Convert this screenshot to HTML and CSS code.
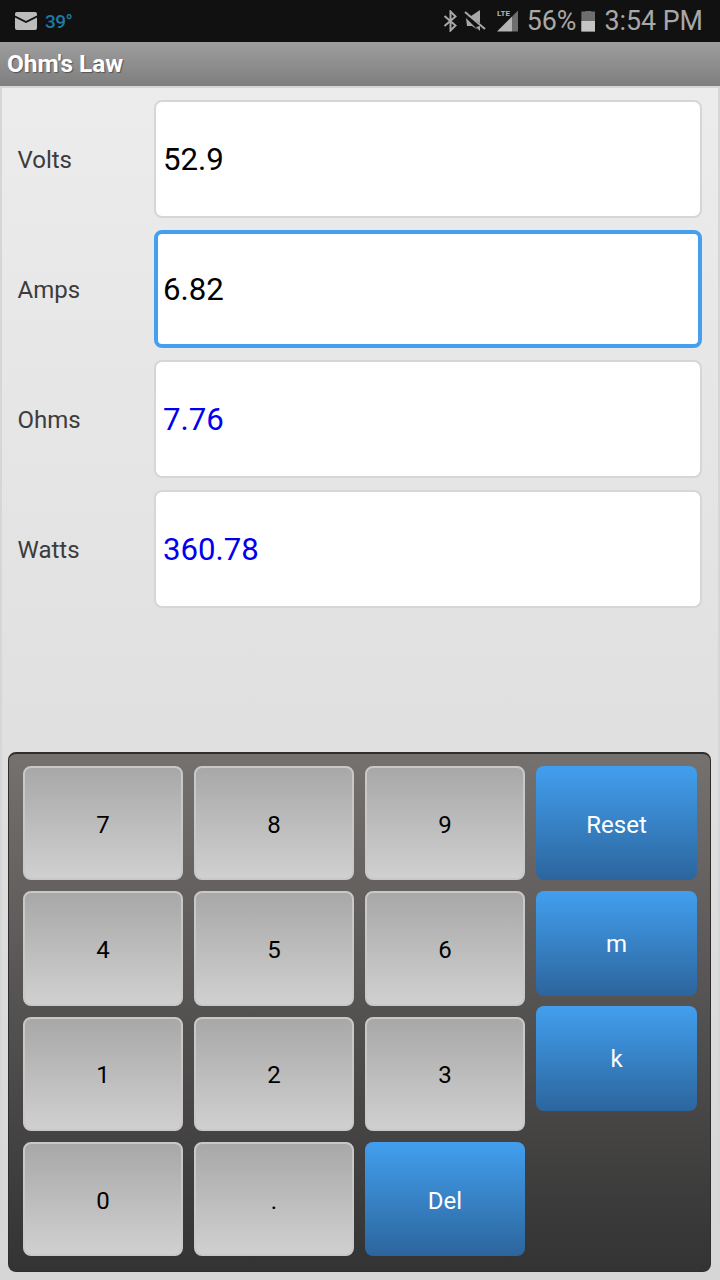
FILE: index.html
```html
<!DOCTYPE html>
<html>
<head>
    <title>Ohm's Law</title>
    <link rel="stylesheet" href="styles.css">
</head>
<body>
    <div class="status-bar">
        <div class="status-left">
            <svg class="icon-mail" width="22" height="18" viewBox="0 0 22 18">
                <path d="M2 0H20a2 2 0 0 1 2 2V3.5L11 9 0 3.5V2a2 2 0 0 1 2-2Z" fill="#bcbcbc"/>
                <path d="M0 5.5 11 11 22 5.5V16a2 2 0 0 1-2 2H2a2 2 0 0 1-2-2Z" fill="#bcbcbc"/>
            </svg>
            <span class="temp">39°</span>
        </div>
        <div class="status-right">
            <svg width="15" height="22" viewBox="0 0 15 22">
                <path d="M1.5 6 12.5 15.5 7.5 20.5V1.5L12.5 6.5 1.5 16" fill="none" stroke="#a8a8a8" stroke-width="2"/>
            </svg>
            <svg class="icon-mute" width="22" height="22" viewBox="0 0 22 22">
                <path d="M4 6H7L16 0V13Z M2 8 14 20 8 16H3Z M16 16V21L12 17Z" fill="#a8a8a8"/>
                <path d="M1 2 21 19" stroke="#a8a8a8" stroke-width="2"/>
            </svg>
            <svg class="icon-signal" width="21" height="22" viewBox="0 0 21 22">
                <path d="M0 21.5 15 6.5V21.5Z" fill="#b4b4b4"/>
                <path d="M15 6.5 21 0.5V21.5H15Z" fill="#6e6e6e"/>
                <text x="0" y="6" class="lte">LTE</text>
            </svg>
            <span class="battery-text">56%</span>
            <div class="battery"><div class="battery-fill"></div></div>
            <span class="clock">3:54 PM</span>
        </div>
    </div>
    <div class="title-bar">Ohm's Law</div>
    <div class="content">
        <div class="fields">
            <div class="field">
                <label>Volts</label>
                <div class="value">52.9</div>
            </div>
            <div class="field">
                <label>Amps</label>
                <div class="value focused">6.82</div>
            </div>
            <div class="field">
                <label>Ohms</label>
                <div class="value calculated">7.76</div>
            </div>
            <div class="field">
                <label>Watts</label>
                <div class="value calculated">360.78</div>
            </div>
        </div>
        <div class="keypad">
            <button class="key">7</button>
            <button class="key">8</button>
            <button class="key">9</button>
            <button class="key blue">Reset</button>
            <button class="key">4</button>
            <button class="key">5</button>
            <button class="key">6</button>
            <div class="units">
                <button class="key blue unit">m</button>
                <button class="key blue unit">k</button>
            </div>
            <button class="key">1</button>
            <button class="key">2</button>
            <button class="key">3</button>
            <button class="key">0</button>
            <button class="key">.</button>
            <button class="key blue">Del</button>
        </div>
    </div>
</body>
</html>
```

FILE: styles.css
```css
html, body {
    margin: 0;
    padding: 0;
}
body {
    width: 720px;
    height: 1280px;
    overflow: hidden;
    font-family: Roboto, sans-serif;
    background: #d6d6d6;
}
.status-bar {
    height: 42px;
    background: #111111;
    display: flex;
    justify-content: space-between;
    align-items: center;
    box-sizing: border-box;
    padding: 0 17px 0 15px;
}
.status-left {
    display: flex;
    align-items: center;
    gap: 8px;
}
.temp {
    color: #1c7ba5;
    font-size: 19px;
    font-weight: 500;
    letter-spacing: -0.5px;
}
.status-right {
    display: flex;
    align-items: center;
    color: #a8a8a8;
    font-size: 26.8px;
}
.icon-mute {
    margin-left: 6px;
}
.icon-signal {
    margin-left: 11px;
}
.lte {
    font-family: Roboto, sans-serif;
    font-size: 8px;
    font-weight: 700;
    fill: #b4b4b4;
}
.battery-text {
    margin-left: 9px;
}
.battery {
    width: 14px;
    height: 21px;
    margin-left: 5px;
    background: #6e6e6e;
    clip-path: polygon(0 1px, 4px 1px, 4px 0, 10px 0, 10px 1px, 100% 1px, 100% 100%, 0 100%);
    display: flex;
    align-items: flex-end;
}
.battery-fill {
    width: 100%;
    height: 11px;
    background: #c4c4c4;
}
.clock {
    margin-left: 9px;
}
.title-bar {
    height: 44px;
    background: linear-gradient(#9e9e9e, #7e7e7e);
    color: #ffffff;
    font-size: 24.4px;
    font-weight: 700;
    line-height: 44px;
    padding-left: 7px;
    text-shadow: 1px 1px 1px #555555;
}
.content {
    height: 1192px;
    box-sizing: border-box;
    margin: 2px 2px 0;
    background: linear-gradient(#ececec, #d6d6d6);
    padding: 12px 7px 0 6px;
}
.fields {
    display: flex;
    flex-direction: column;
    gap: 12px;
    padding-right: 9px;
    height: 652px;
}
.field {
    display: flex;
    align-items: center;
    height: 118px;
}
.field label {
    flex: 0 0 136px;
    padding: 2px 0 0 9.5px;
    font-size: 24px;
    color: #3c3c3c;
}
.value {
    flex: 1;
    height: 118px;
    box-sizing: border-box;
    background: #ffffff;
    border: 2px solid #d6d6d6;
    border-radius: 8px;
    padding: 0 0 0 7.5px;
    display: flex;
    align-items: center;
    font-size: 31.2px;
    color: #000000;
}
.value.focused {
    border: 4px solid #469fee;
    padding-left: 5.5px;
}
.value.calculated {
    color: #0000ee;
}
.keypad {
    width: 703px;
    height: 520px;
    box-sizing: border-box;
    border: 1px solid #2e2e2e;
    border-top-width: 2px;
    border-radius: 8px;
    background: linear-gradient(#75716f, #333333);
    padding: 12px 13px 0 14px;
    display: grid;
    grid-template-columns: repeat(3, 160px) 161px;
    grid-template-rows: repeat(4, 114.33px);
    gap: 11px;
}
.key {
    font-family: Roboto, sans-serif;
    font-size: 24px;
    color: #000000;
    border: 2px solid #c8c8c8;
    border-radius: 8px;
    background: linear-gradient(#a8a8a8, #d0d0d0);
    padding: 3px 0 0;
}
.key.blue {
    color: #ffffff;
    border: none;
    background: linear-gradient(#429fee, #2c659d);
}
.units {
    grid-row: span 2;
    display: flex;
    flex-direction: column;
    gap: 10px;
}
.key.unit {
    height: 105px;
    padding: 0;
    flex: none;
}
```
